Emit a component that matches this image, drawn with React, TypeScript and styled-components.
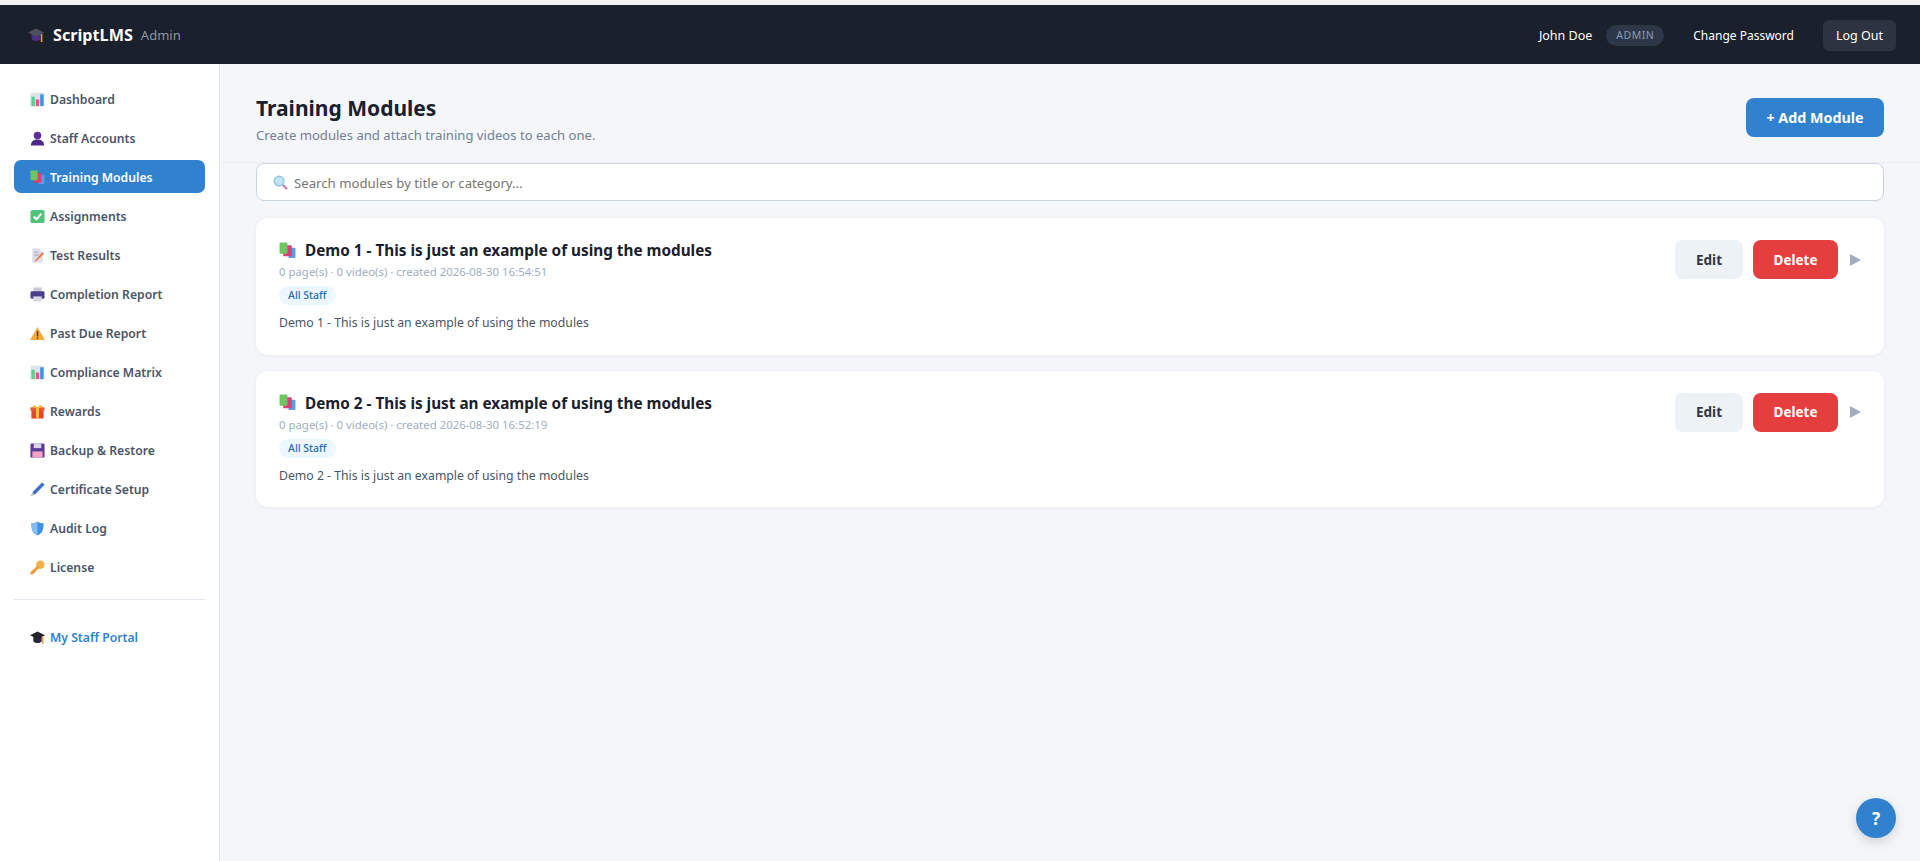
import React from "react";
import styled, {createGlobalStyle} from "styled-components";

const GlobalStyle = createGlobalStyle`
    * {
        box-sizing: border-box;
    }

    html, body {
        margin: 0;
        padding: 0;
        height: 100%;
        overflow: hidden;
        background: #fff;
    }

    body {
        font-family: "Noto Sans", "Open Sans", sans-serif;
        color: #1a202c;
    }
`;

const Page = styled.div`
    height: 861px;
    display: flex;
    flex-direction: column;
    border-top: 5px solid #f1f2f4;
`;

const Topbar = styled.header`
    flex: 0 0 59px;
    background: #1a202c;
    display: flex;
    align-items: center;
    justify-content: space-between;
    padding: 1px 24px 0 28px;
`;

const Brand = styled.div`
    display: flex;
    align-items: center;
`;

const BrandName = styled.span`
    margin-left: 9px;
    font-size: 16.2px;
    font-weight: 700;
    color: #fff;
`;

const BrandRole = styled.span`
    margin-left: 8px;
    font-size: 13px;
    color: #8f96a3;
`;

const UserArea = styled.div`
    display: flex;
    align-items: center;
`;

const UserName = styled.span`
    font-size: 12.5px;
    color: #fff;
`;

const RoleBadge = styled.span`
    margin-left: 14px;
    height: 21px;
    padding: 0 10px;
    display: flex;
    align-items: center;
    border-radius: 11px;
    background: #2d3748;
    color: #8a9ab3;
    font-size: 10.5px;
    letter-spacing: 0.5px;
`;

const TopLink = styled.span`
    margin-left: 29px;
    font-size: 12px;
    color: #fff;
`;

const LogoutButton = styled.span`
    margin-left: 29px;
    height: 31px;
    padding: 0 13px;
    display: flex;
    align-items: center;
    border-radius: 6px;
    background: #2d3340;
    color: #fff;
    font-size: 12.5px;
`;

const Body = styled.div`
    flex: 1;
    min-height: 0;
    display: flex;
`;

const Sidebar = styled.nav`
    flex: 0 0 220px;
    background: #fff;
    border-right: 1px solid #e2e8f0;
    padding: 18px 14px 0;
`;

const NavItem = styled.div<{ $active?: boolean }>`
    height: 33px;
    margin-bottom: 6px;
    padding: 1px 16px 0;
    display: flex;
    align-items: center;
    gap: 5px;
    border-radius: 7px;
    font-size: 12.2px;
    font-weight: 600;
    background: ${p => (p.$active ? "#3182ce" : "transparent")};
    color: ${p => (p.$active ? "#fff" : "#4a5568")};
`;

const NavDivider = styled.div`
    height: 1px;
    margin: 16px 0 20px;
    background: #e2e8f0;
`;

const PortalItem = styled(NavItem)`
    color: #3182ce;
`;

const Main = styled.main`
    flex: 1;
    min-width: 0;
    background: #f4f6fa;
    padding: 0 36px;
    position: relative;
`;

const PageHeader = styled.div`
    height: 99px;
    margin: 0 -36px;
    padding: 29px 36px 0;
    display: flex;
    justify-content: space-between;
    align-items: flex-start;
    border-bottom: 1px solid #eceef3;
`;

const PageTitle = styled.h1`
    margin: 0;
    font-size: 21px;
    line-height: 30px;
    font-weight: 700;
    color: #1a202c;
`;

const PageSubtitle = styled.p`
    margin: 3px 0 0;
    font-size: 13.1px;
    line-height: 18px;
    color: #718096;
`;

const PrimaryButton = styled.button`
    height: 39px;
    width: 138px;
    margin-top: 5px;
    border: 0;
    border-radius: 8px;
    background: #3182ce;
    color: #fff;
    font-family: inherit;
    font-size: 14.3px;
    font-weight: 700;
`;

const SearchBox = styled.div`
    height: 38px;
    margin-bottom: 17px;
    padding: 1px 16px 0;
    display: flex;
    align-items: center;
    gap: 6px;
    background: #fff;
    border: 1px solid #cbd5e0;
    border-radius: 8px;
    font-size: 13.2px;
    color: #757575;
`;

const ModuleCard = styled.article`
    height: 136.6px;
    margin-bottom: 16px;
    padding: 22px 23px 0;
    display: flex;
    justify-content: space-between;
    background: #fff;
    border-radius: 12px;
    box-shadow: 0 1px 4px rgba(0, 0, 0, 0.05);
`;

const CardTitle = styled.div`
    display: flex;
    align-items: center;
    gap: 9px;
    font-size: 15.3px;
    line-height: 20px;
    font-weight: 700;
    color: #1a202c;
`;

const CardMeta = styled.div`
    margin-top: 4px;
    font-size: 11.4px;
    line-height: 16px;
    color: #a0aec0;
`;

const AudienceTag = styled.span`
    display: inline-block;
    margin-top: 6px;
    padding: 0 9px;
    height: 19px;
    line-height: 19px;
    border-radius: 10px;
    background: #ebf8ff;
    color: #2b6cb0;
    font-size: 10.5px;
    font-weight: 500;
`;

const CardText = styled.div`
    margin-top: 9px;
    font-size: 12.25px;
    line-height: 18px;
    color: #4a5568;
`;

const CardActions = styled.div`
    display: flex;
    align-items: center;
    align-self: flex-start;
`;

const EditButton = styled.button`
    width: 68px;
    height: 39px;
    border: 0;
    border-radius: 8px;
    background: #edf2f7;
    color: #2d3748;
    font-family: inherit;
    font-size: 13.5px;
    font-weight: 700;
`;

const DeleteButton = styled.button`
    width: 85px;
    height: 39px;
    margin-left: 10px;
    border: 0;
    border-radius: 8px;
    background: #e53e3e;
    color: #fff;
    font-family: inherit;
    font-size: 13.5px;
    font-weight: 700;
`;

const Chevron = styled.span`
    margin-left: 12px;
    width: 0;
    height: 0;
    border-style: solid;
    border-width: 6.5px 0 6.5px 11px;
    border-color: transparent transparent transparent #a0aec0;
`;

const HelpButton = styled.div`
    position: absolute;
    right: 24px;
    bottom: 23px;
    width: 40px;
    height: 40px;
    border-radius: 50%;
    display: flex;
    align-items: center;
    justify-content: center;
    background: #3182ce;
    color: #fff;
    font-size: 17px;
    font-weight: 700;
    box-shadow: 0 4px 12px rgba(0, 0, 0, 0.15);
`;

const IconSvg = styled.svg`
    flex: none;
`;

const Icon = ({size = 15, children}: { size?: number; children: React.ReactNode }) => (
    <IconSvg width={size} height={size} viewBox="0 0 16 16">
        {children}
    </IconSvg>
);

const CapIcon = ({light, size = 16}: { light?: boolean; size?: number }) => (
    <Icon size={size}>
        <path d="M3.5 7v5c1 2.500 8 2.500 9 0V7z" fill={light ? "#4a2f86" : "#2b2440"}/>
        <path d="M0 5.500 8 1.500 16 5.500 8 9.500z" fill={light ? "#50505c" : "#23232c"}/>
        <path d="M12.800 7h1.600v8h-1.600z" fill="#f09a3e"/>
    </Icon>
);

const ChartIcon = () => (
    <Icon>
        <rect x="0.500" y="0.500" width="15" height="15" rx="1.500" fill="#dfe3ea"/>
        <rect x="1.500" y="5" width="3.600" height="10" fill="#5ccf8e"/>
        <rect x="6.200" y="8" width="3.600" height="7" fill="#ef4f87"/>
        <rect x="10.900" y="2.500" width="3.600" height="12.500" fill="#3e92e0"/>
    </Icon>
);

const BustIcon = () => (
    <Icon>
        <circle cx="8" cy="4.800" r="4" fill="#5b2f9a"/>
        <path d="M1 15.500c0-4.500 3-6.500 7-6.500s7 2 7 6.500z" fill="#4d2a8a"/>
    </Icon>
);

const BooksIcon = ({size = 15}: { size?: number }) => (
    <Icon size={size}>
        <rect x="9" y="5.500" width="6.500" height="9.500" rx="0.800" fill="#5b9be6"/>
        <rect x="4" y="3" width="8" height="10.500" rx="0.800" fill="#dc3f78"/>
        <rect x="0.500" y="0.500" width="7.500" height="10.500" rx="0.800" fill="#6cc763"/>
    </Icon>
);

const CheckIcon = () => (
    <Icon>
        <rect x="0.500" y="1" width="15" height="14" rx="2" fill="#4fc37a"/>
        <path d="M4 8 7 11 12 5" fill="none" stroke="#fff" strokeWidth="2.200"/>
    </Icon>
);

const MemoIcon = () => (
    <Icon>
        <path d="M2.500 0.500h7l4 4v11h-11z" fill="#dcdbe8"/>
        <path d="M4.500 4.500h4M4.500 7.500h5" stroke="#a9a6bd" strokeWidth="1"/>
        <path d="M15 6 7 13.500 5 15 6 12.500 13.500 4.500z" fill="#f2713f"/>
    </Icon>
);

const PrinterIcon = () => (
    <Icon>
        <rect x="3.500" y="0.500" width="9" height="5" fill="#c9c8db"/>
        <rect x="0.500" y="4.500" width="15" height="8" rx="1.500" fill="#4a3f8c"/>
        <rect x="3.500" y="10" width="9" height="5.500" fill="#d8d8e6"/>
    </Icon>
);

const WarningIcon = () => (
    <Icon>
        <path d="M8 1 16 15H0z" fill="#f6ad3c"/>
        <rect x="7.200" y="5.500" width="1.600" height="5.500" fill="#5a3b10"/>
        <rect x="7.200" y="12" width="1.600" height="1.600" fill="#5a3b10"/>
    </Icon>
);

const GiftIcon = () => (
    <Icon>
        <rect x="1.500" y="6" width="13" height="9.500" fill="#e8452f"/>
        <rect x="0.500" y="3.500" width="15" height="3.500" fill="#f0572f"/>
        <rect x="6.500" y="3.500" width="3" height="12" fill="#f8c33c"/>
        <path d="M8 4C6 0.500 2.500 0.500 3 2.500 3.500 4 6 4 8 4c2 0 4.500 0 5-1.500C13.500 0.500 10 0.500 8 4z" fill="#f8c33c"/>
    </Icon>
);

const FloppyIcon = () => (
    <Icon>
        <path d="M0.500 2a1.500 1.500 0 0 1 1.500-1.500h12a1.500 1.500 0 0 1 1.500 1.500v13.500H0.500z" fill="#5b3a96"/>
        <rect x="4" y="0.500" width="8" height="5" fill="#d7d4ea"/>
        <rect x="2.500" y="9" width="11" height="6.500" fill="#f0a3c4"/>
    </Icon>
);

const PenIcon = () => (
    <Icon>
        <path d="M13 0.500 15.500 3 5 13.500 2.500 11z" fill="#3a6fc4"/>
        <path d="M2.500 11 5 13.500 0.500 15.500z" fill="#b8bccb"/>
    </Icon>
);

const ShieldIcon = () => (
    <Icon>
        <path d="M8 0.500c2 1.500 4.500 2 6.500 2 0 6.500-1 10.500-6.500 13C2.500 13 1.500 9 1.500 2.500c2 0 4.500-.5 6.500-2z" fill="#3d8fe8"/>
        <path d="M1.500 2.500c2 0 4.500-.5 6.500-2v15C2.500 13 1.500 9 1.500 2.500z" fill="#86bdf2"/>
    </Icon>
);

const KeyIcon = () => (
    <Icon>
        <circle cx="11" cy="5" r="4.500" fill="#f6b04a"/>
        <path d="M8.500 5.500 10.500 7.500 3 15.500 0.500 15.500 0.500 13z" fill="#f09a3e"/>
    </Icon>
);

const GlassIcon = () => (
    <Icon>
        <circle cx="6.500" cy="6.500" r="5.200" fill="#bfe3f2" stroke="#8cc6dd" strokeWidth="1.400"/>
        <path d="M10.500 10.500 15 15" stroke="#c58fb5" strokeWidth="2.600"/>
    </Icon>
);

const navItems: { label: string; icon: React.ReactNode; active?: boolean }[] = [
    {label: "Dashboard", icon: <ChartIcon/>},
    {label: "Staff Accounts", icon: <BustIcon/>},
    {label: "Training Modules", icon: <BooksIcon/>, active: true},
    {label: "Assignments", icon: <CheckIcon/>},
    {label: "Test Results", icon: <MemoIcon/>},
    {label: "Completion Report", icon: <PrinterIcon/>},
    {label: "Past Due Report", icon: <WarningIcon/>},
    {label: "Compliance Matrix", icon: <ChartIcon/>},
    {label: "Rewards", icon: <GiftIcon/>},
    {label: "Backup & Restore", icon: <FloppyIcon/>},
    {label: "Certificate Setup", icon: <PenIcon/>},
    {label: "Audit Log", icon: <ShieldIcon/>},
    {label: "License", icon: <KeyIcon/>},
];

const modules = [
    {title: "Demo 1 - This is just an example of using the modules", created: "2026-08-30 16:54:51"},
    {title: "Demo 2 - This is just an example of using the modules", created: "2026-08-30 16:52:19"},
];

export default function App() {
    return (
        <>
            <GlobalStyle/>
            <Page>
                <Topbar>
                    <Brand>
                        <CapIcon light/>
                        <BrandName>ScriptLMS</BrandName>
                        <BrandRole>Admin</BrandRole>
                    </Brand>
                    <UserArea>
                        <UserName>John Doe</UserName>
                        <RoleBadge>ADMIN</RoleBadge>
                        <TopLink>Change Password</TopLink>
                        <LogoutButton>Log Out</LogoutButton>
                    </UserArea>
                </Topbar>
                <Body>
                    <Sidebar>
                        {navItems.map(item => (
                            <NavItem key={item.label} $active={item.active}>
                                {item.icon}
                                {item.label}
                            </NavItem>
                        ))}
                        <NavDivider/>
                        <PortalItem>
                            <CapIcon size={15}/>
                            My Staff Portal
                        </PortalItem>
                    </Sidebar>
                    <Main>
                        <PageHeader>
                            <div>
                                <PageTitle>Training Modules</PageTitle>
                                <PageSubtitle>Create modules and attach training videos to each one.</PageSubtitle>
                            </div>
                            <PrimaryButton>+ Add Module</PrimaryButton>
                        </PageHeader>
                        <SearchBox>
                            <GlassIcon/>
                            Search modules by title or category...
                        </SearchBox>
                        {modules.map(m => (
                            <ModuleCard key={m.title}>
                                <div>
                                    <CardTitle>
                                        <BooksIcon size={17}/>
                                        {m.title}
                                    </CardTitle>
                                    <CardMeta>0 page(s) · 0 video(s) · created {m.created}</CardMeta>
                                    <AudienceTag>All Staff</AudienceTag>
                                    <CardText>{m.title}</CardText>
                                </div>
                                <CardActions>
                                    <EditButton>Edit</EditButton>
                                    <DeleteButton>Delete</DeleteButton>
                                    <Chevron/>
                                </CardActions>
                            </ModuleCard>
                        ))}
                        <HelpButton>?</HelpButton>
                    </Main>
                </Body>
            </Page>
        </>
    );
}
